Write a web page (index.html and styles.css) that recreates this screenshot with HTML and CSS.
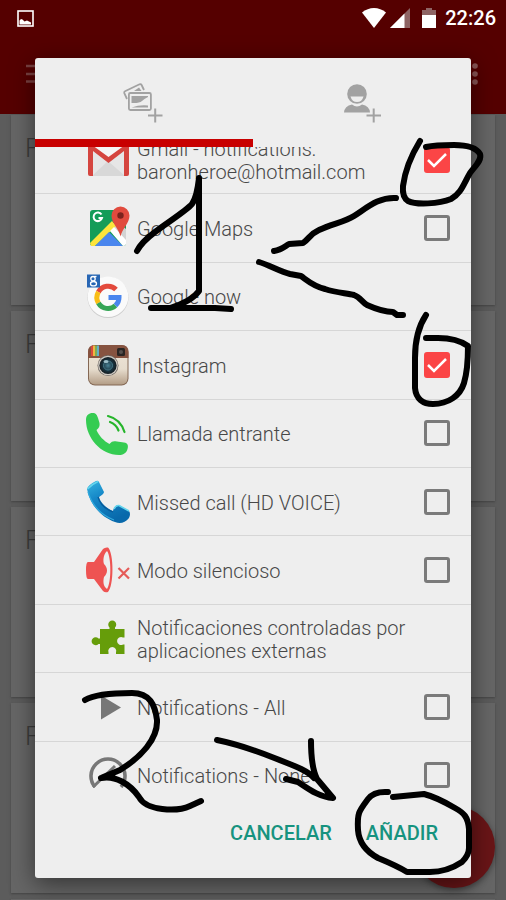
FILE: index.html
```html
<!DOCTYPE html>
<html lang="es">
<head>
    <meta charset="UTF-8">
    <meta name="viewport" content="width=device-width, initial-scale=1.0">
    <title>Añadir notificaciones</title>
    <link rel="stylesheet" href="styles.css">
</head>
<body>
    <div class="screen">
        <header class="top">
            <div class="status-bar">
                <svg class="picture" width="17" height="17" viewBox="0 0 17 17">
                    <rect x="1" y="1" width="15" height="15" fill="none" stroke="#fff" stroke-width="1.6"/>
                    <path d="M2.500 14.500V10.500L4 9L5.500 9.500L7.500 11.500L10 10.500L12 11.500L14 12.500V14.500Z" fill="#fff"/>
                </svg>
                <svg width="24" height="20" viewBox="0 0 24 20">
                    <path d="M0 4.500C7-1.500 17-1.500 24 4.500L12 20Z" fill="#fff"/>
                </svg>
                <svg width="20" height="20" viewBox="0 0 20 20">
                    <path d="M0 20L20 0V20Z" fill="#8e6464"/>
                    <path d="M0 20L14.500 5.500V20Z" fill="#fff"/>
                </svg>
                <svg class="battery" width="14" height="20" viewBox="0 0 14 20">
                    <path d="M0 2H4V0H10V2H14V8H0Z" fill="#8e6464"/>
                    <path d="M0 7H14V20H0Z" fill="#fff"/>
                </svg>
                <span class="clock">22:26</span>
            </div>
            <div class="app-bar">
                <button class="bar-button" aria-label="Menú">
                    <svg width="22" height="20" viewBox="0 0 22 20" stroke="#7a4040" stroke-width="2.500">
                        <path d="M0 2H22M0 10H22M0 17.500H22"/>
                    </svg>
                </button>
                <button class="bar-button" aria-label="Más opciones">
                    <svg width="6" height="24" viewBox="0 0 6 24" fill="#8a5555">
                        <circle cx="3" cy="4" r="2.800"/><circle cx="3" cy="12" r="2.800"/><circle cx="3" cy="20" r="2.800"/>
                    </svg>
                </button>
            </div>
        </header>
        <main class="cards">
            <section class="card">F</section>
            <section class="card">F</section>
            <section class="card">F</section>
            <section class="card">F</section>
            <section class="card"></section>
        </main>
        <button class="fab" aria-label="Nuevo"></button>
    </div>

    <div class="overlay">
        <div class="dialog" role="dialog" aria-label="Notificaciones">
            <nav class="tabs">
                <button class="tab active" aria-label="Añadir imagen">
                    <svg width="44" height="44" viewBox="0 0 44 44" fill="none" stroke="#a2a2a2" stroke-width="1.800">
                        <path d="M5 22L2.300 16.200Q1.800 14.800 3 14.200L17.500 7.300Q19 6.800 19.600 8L22 13"/>
                        <path d="M12 14L17 10.500L19.500 14Z" fill="#a2a2a2" stroke="none"/>
                        <rect x="6.900" y="16" width="22" height="17" rx="1.500"/>
                        <path d="M9.500 19H26V20Q22 22 20 24Q17 26.500 9.500 26ZM9.500 30.500Q18 27.500 26 28.500V30.500Z" fill="#a2a2a2" stroke="none"/>
                        <path d="M26 38.500H40.500M33.200 31.500V45.500" stroke-width="2"/>
                    </svg>
                </button>
                <button class="tab" aria-label="Añadir contacto">
                    <svg width="44" height="44" viewBox="0 0 44 44" fill="#a2a2a2">
                        <circle cx="17" cy="17" r="9.800"/>
                        <path d="M10.500 19.500H23.500Q22 25 17 25Q12 25 10.500 19.500Z" fill="#eee"/>
                        <path d="M4 35.500Q4.500 29 12 27.500Q17 31.500 22 27.500Q29.500 29 30 35.500Z"/>
                        <path d="M26.500 38.500H41M33.700 31.500V45.500" fill="none" stroke="#a2a2a2" stroke-width="2"/>
                    </svg>
                </button>
            </nav>

            <div class="list-window">
                <div class="list">
                    <label class="row">
                        <svg class="icon" viewBox="0 0 44 44">
                            <rect x="2" y="7" width="41" height="31" rx="2" fill="#e6e6e6"/>
                            <path d="M6 38L22 23L39 38Z" fill="#d8d8d8"/>
                            <path d="M7 9L22.500 24L38 9Z" fill="#f5f5f5"/>
                            <path d="M2 9V36Q2 38 4 38H7V13L22.500 25L38 13V38H41Q43 38 43 36V9Q42 6 39 7L22.500 19L6 7Q3 6 2 9Z" fill="#d5453f"/>
                        </svg>
                        <span class="name">Gmail - notifications: baronheroe@hotmail.com</span>
                        <input type="checkbox" checked>
                    </label>
                    <label class="row">
                        <svg class="icon" viewBox="0 0 44 44">
                            <rect x="4" y="4" width="36" height="36" rx="3" fill="#149c58"/>
                            <path d="M22 22L30 15L40 23V38L38 40Z" fill="#d3d3d3"/>
                            <path d="M4 37L26 15L30 20L9 40H5Z" fill="#fce43d"/>
                            <path d="M9 40L23 26L37 40Z" fill="#4a86ee"/>
                            <path d="M24 25L28 21L40 34V38Q39 40 37 40Z" fill="#fff"/>
                            <path d="M15.500 8.500A4.300 4.300 0 1 0 16 12H12.500" fill="none" stroke="#fff" stroke-width="2"/>
                            <path d="M34.500 30.500C33 23 25.500 17 25.500 9.500A9 9 0 0 1 43.500 9.500C43.500 17 36 23 34.500 30.500Z" fill="#e14b3e"/>
                            <circle cx="34.500" cy="9.500" r="3.200" fill="#7b231d"/>
                        </svg>
                        <span class="name">Google Maps</span>
                        <input type="checkbox">
                    </label>
                    <div class="row">
                        <svg class="icon" viewBox="0 0 44 44">
                            <circle cx="22" cy="23.500" r="20.500" fill="#ccc"/>
                            <circle cx="22" cy="22.700" r="20.300" fill="#fafafa"/>
                            <g fill="none" stroke-width="5">
                                <path d="M30 15.500A11 11 0 0 0 12.400 18" stroke="#e34a3c"/>
                                <path d="M12.400 18A11 11 0 0 0 12.400 29" stroke="#f9bd15"/>
                                <path d="M12.400 29A11 11 0 0 0 29.500 31.500" stroke="#35a555"/>
                                <path d="M29.500 31.500A11 11 0 0 0 33 23.500H22.500" stroke="#4a86ee"/>
                            </g>
                            <rect x="1" y="0.500" width="13" height="13" fill="#2766b4"/>
                            <g fill="none" stroke="#fff" stroke-width="1.300">
                                <circle cx="7" cy="4.700" r="2.200"/><ellipse cx="7.500" cy="9.700" rx="3" ry="2.200"/><path d="M8 2.500H10.500"/>
                            </g>
                        </svg>
                        <span class="name">Google now</span>
                    </div>
                    <label class="row">
                        <svg class="icon" viewBox="0 0 44 44">
                            <defs>
                                <linearGradient id="body" x1="0" y1="0" x2="0" y2="1">
                                    <stop offset="0" stop-color="#eee5d8"/><stop offset="0.600" stop-color="#e6dccd"/><stop offset="1" stop-color="#b49e87"/>
                                </linearGradient>
                                <radialGradient id="lens">
                                    <stop offset="0" stop-color="#4a8294"/><stop offset="0.600" stop-color="#183441"/><stop offset="1" stop-color="#151c20"/>
                                </radialGradient>
                            </defs>
                            <rect x="2" y="2" width="40.500" height="40.500" rx="7" fill="#846854"/>
                            <rect x="3" y="3" width="38.500" height="38.500" rx="6" fill="url(#body)"/>
                            <path d="M2 15V9Q2 2 9 2H35.500Q42.500 2 42.500 9V15Z" fill="#865340"/>
                            <path d="M5 3.500L7 2.500V13H5Z" fill="#d84b3c"/>
                            <path d="M7 2.500H9V13H7Z" fill="#eeb642"/>
                            <path d="M9 2.500H11V13H9Z" fill="#7fac55"/>
                            <path d="M11 2.500H13V13H11Z" fill="#63b0c6"/>
                            <rect x="31" y="5" width="8" height="8" rx="1.500" fill="#292422"/>
                            <circle cx="35" cy="9" r="2" fill="#56504d"/>
                            <circle cx="22" cy="22.500" r="10.500" fill="#6e6964"/>
                            <circle cx="22" cy="22.500" r="9.800" fill="#cfcac3"/>
                            <circle cx="22" cy="22.500" r="8.600" fill="url(#lens)"/>
                            <circle cx="22" cy="22.500" r="4.500" fill="none" stroke="#467786"/>
                            <ellipse cx="20" cy="18.500" rx="2.500" ry="1.500" fill="#9ec0ca"/>
                        </svg>
                        <span class="name">Instagram</span>
                        <input type="checkbox" checked>
                    </label>
                    <label class="row">
                        <svg class="icon" viewBox="0 0 44 44">
                            <path d="M0 9C0 4 3 2 6.500 2C10 2 11 4 12 7L13.500 12C14 15 13 17 10.500 19C13 25 18 30 23.500 33C26 30 27.500 30 31 30.500L38 31.500C42 32 42.500 35 41.500 38C40.500 42 37 44 33 44C15 44 0 27 0 9Z" fill="#35cc52"/>
                            <path d="M22 5C30 7 36 13 38.500 21M24 11C28.500 12.500 31 15.500 32.500 19.500" fill="none" stroke="#26b52b" stroke-width="2.200" stroke-linecap="round"/>
                        </svg>
                        <span class="name">Llamada entrante</span>
                        <input type="checkbox">
                    </label>
                    <label class="row">
                        <svg class="icon" viewBox="0 0 44 44">
                            <defs>
                                <linearGradient id="blue" x1="0" y1="0" x2="0.500" y2="1">
                                    <stop offset="0" stop-color="#36b5e1"/><stop offset="0.400" stop-color="#1688c8"/><stop offset="1" stop-color="#0869ab"/>
                                </linearGradient>
                            </defs>
                            <path d="M1 9Q2 5 10 1Q12 0 13 2L18 12Q18 14 13 17C14 22 20 28 27 31C28 27 30 25 33 25L43 31Q45 34 43 38C39 43 34 44 29 42C15 37 4 25 1 9Z" fill="url(#blue)"/>
                            <path d="M1.500 9Q6 4 12 1.500M28 29Q30 25 33 25.500L43 31" fill="none" stroke="#64d5ed" stroke-width="1.600"/>
                            <path d="M12 17C14 24 19 29 27 32" fill="none" stroke="#075a9a" stroke-width="1.200"/>
                            <path d="M2 12C6 25 15 35 28 40" fill="none" stroke="#31a8dc" stroke-width="1.200"/>
                        </svg>
                        <span class="name">Missed call (HD VOICE)</span>
                        <input type="checkbox">
                    </label>
                    <label class="row">
                        <svg class="icon" viewBox="0 0 44 44">
                            <path d="M2 14H8L17 1Q19-1 22-0.500C28 5 28 38 22 44Q19 45 17 43L8 31H2Q0 31 0 22Q0 14 2 14Z" fill="#ee5352"/>
                            <path d="M21 3C17 7 17 13 18 16C22 20 22 25 18 29C17 33 17 38 21 41C25.500 35 25.500 9 21 3Z" fill="#eee"/>
                            <path d="M32.500 20L43 30.500M43 20L32.500 30.500" stroke="#e55b58" stroke-width="2.200"/>
                        </svg>
                        <span class="name">Modo silencioso</span>
                        <input type="checkbox">
                    </label>
                    <div class="row">
                        <svg class="icon" viewBox="0 0 44 44">
                            <path d="M14 13H23.500V11.500A4 4 0 1 1 29 11.500V13H38.500V21.500H37A4 4 0 1 0 37 28.500H38.500V38H30V36.500A4 4 0 1 0 22.500 36.500V38H14V28H12.500A4 4 0 1 1 12.500 22.500H14Z" fill="#669d0a"/>
                        </svg>
                        <span class="name">Notificaciones controladas por aplicaciones externas</span>
                    </div>
                    <label class="row">
                        <svg class="icon" viewBox="0 0 44 44">
                            <path d="M15 10.500L35 22.500L15 34.500Z" fill="#777"/>
                        </svg>
                        <span class="name">Notifications - All</span>
                        <input type="checkbox">
                    </label>
                    <label class="row">
                        <svg class="icon" viewBox="0 0 44 44">
                            <path d="M9 34A17 17 0 1 1 35 34" fill="none" stroke="#777" stroke-width="3.600"/>
                            <path d="M7 34L29 13" stroke="#777" stroke-width="3"/>
                        </svg>
                        <span class="name">Notifications - None</span>
                        <input type="checkbox">
                    </label>
                </div>
            </div>

            <div class="actions">
                <button class="action">CANCELAR</button>
                <button class="action">AÑADIR</button>
            </div>
        </div>
    </div>

    <!-- hand-drawn steps: 1 = pick items, 2 = confirm -->
    <svg class="drawing" viewBox="0 0 506 900" preserveAspectRatio="none">
        <path d="M137 251C141 243 147 238 155 232C168 222 186 211 192 204C197 197 198 187 199 178V291C194 298 183 304 170 308M151 308H195L215 308L231 309"/>
        <path d="M274 251C281 250 284 247 289 244L303 243C309 239 310 234 319 230C331 224 345 222 354 216C368 207 379 197 396 198"/>
        <path d="M259 262C269 265 281 272 290 274L301 276C308 281 313 286 325 289C337 293 347 293 354 295C360 297 362 302 367 305C376 309 384 312 393 312L397 315H403"/>
        <path d="M420 141C412 154 405 171 403 186Q402 197 408 201C416 205 439 204 451 199C461 194 464 183 470 173C476 165 482 160 480 154C476 147 466 145 454 145C443 145 435 145 426 147"/>
        <path d="M426 315C418 327 415 340 415 358V388C416 399 423 404 433 404C448 404 460 396 464 383C467 373 468 358 468 346C461 341 449 338 438 338H426"/>
        <path d="M85 700C95 694 113 693 132 693C150 693 155 705 157 720C158 739 141 757 120 770L101 778C115 775 130 784 139 797C146 811 177 812 190 806L201 801"/>
        <path d="M217 740C237 744 257 751 277 759C292 765 307 770 314 778M311 741C311 755 312 769 317 779L333 798C318 797 306 787 298 782L286 779"/>
        <path d="M388 792Q374 791 368 799C359 811 357 813 358 830C359 844 367 852 378 858C390 863 399 867 407 872H430C445 872 456 866 462 862Q469 855 469 848V829C468 817 464 813 455 808C443 801 432 796 424 794L393 797"/>
    </svg>
</body>
</html>
```
FILE: styles.css
```css
* {
    box-sizing: border-box;
}

body {
    margin: 0;
    background-color: #5c5c5c;
    font-family: Roboto, "Noto Sans", sans-serif;
}

button {
    border: none;
    padding: 0;
    background: none;
    font-family: inherit;
    cursor: pointer;
}

.screen {
    position: relative;
    height: 100vh;
    overflow: hidden;
}

.top {
    height: 114px;
    background-color: #550000;
}

.status-bar {
    display: flex;
    align-items: center;
    gap: 4px;
    height: 36px;
    padding: 0 10px 0 17px;
}

.picture {
    margin-right: auto;
}

.battery {
    margin: 0 5px 0 8px;
}

.clock {
    color: #fff;
    font-size: 20px;
    font-weight: 500;
}

.app-bar {
    display: flex;
    justify-content: space-between;
    align-items: center;
    height: 78px;
    padding: 0 28px 0 26px;
}

.cards {
    display: flex;
    flex-direction: column;
    gap: 6px;
    padding: 1px 11px;
}

.card {
    flex: none;
    height: 190px;
    padding: 18px 14px;
    background-color: #666;
    box-shadow: 0 1px 2px #444;
    color: #3c3c3c;
    font-size: 26px;
    font-weight: 300;
}

/* floats over the cards, below the dialog */
.fab {
    position: absolute;
    right: 11px;
    bottom: 12px;
    width: 82px;
    height: 82px;
    border-radius: 50%;
    background-color: #691517;
    box-shadow: 0 2px 6px rgba(0, 0, 0, 0.4);
}

.overlay {
    position: absolute;
    inset: 0;
    display: flex;
    padding: 58px 35px 22px;
}

.dialog {
    flex: 1;
    display: flex;
    flex-direction: column;
    min-width: 0;
    border-radius: 3px;
    background-color: #eee;
    box-shadow: 0 6px 24px rgba(0, 0, 0, 0.5);
}

.tabs {
    display: flex;
    height: 89px;
}

.tab {
    flex: 1;
    border-bottom: 8px solid transparent;
}

.tab svg {
    display: block;
    margin: 0 auto;
    overflow: visible;
}

.tab.active {
    border-bottom-color: #c80000;
}

.list-window {
    flex: 1;
    min-height: 0;
    overflow: hidden;
}

/* list is shown part way scrolled */
.list {
    display: grid;
    grid-auto-rows: 1fr;
    height: 684px;
    margin-top: -21px;
}

.row {
    display: flex;
    align-items: center;
    gap: 7px;
    padding: 0 21px 0 51px;
    border-bottom: 1px solid #d6d6d6;
}

.icon {
    flex: none;
    width: 44px;
    height: 44px;
    overflow: visible;
}

.name {
    flex: 1;
    padding-top: 3px;
    color: #484848;
    font-size: 20px;
    font-weight: 300;
    line-height: 23px;
}

input {
    appearance: none;
    flex: none;
    width: 26px;
    height: 26px;
    margin: 0;
    border: 3px solid #7a7a7a;
    border-radius: 3px;
}

input:checked {
    border-color: #fb4546;
    background: #fb4546 url("data:image/svg+xml,%3Csvg xmlns='http://www.w3.org/2000/svg' viewBox='0 0 22 22'%3E%3Cpath d='M2 11L8 17L20 5' fill='none' stroke='%23fff' stroke-width='2.500'/%3E%3C/svg%3E") center / 22px no-repeat;
}

.actions {
    display: flex;
    justify-content: flex-end;
    gap: 34px;
    height: 90px;
    padding: 0 33px;
}

.action {
    color: #16937f;
    font-size: 20px;
    font-weight: 500;
}

.drawing {
    position: absolute;
    inset: 0;
    width: 100%;
    height: 100%;
    fill: none;
    stroke: #000;
    stroke-width: 6;
    stroke-linecap: round;
    stroke-linejoin: round;
    pointer-events: none;
}
```
